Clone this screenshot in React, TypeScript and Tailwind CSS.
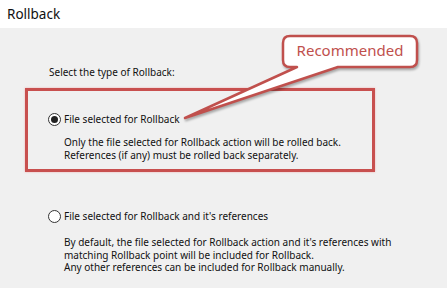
import React from "react";

function Radio({ checked }: { checked?: boolean }) {
  return (
    <span className="flex h-[13px] w-[13px] shrink-0 items-center justify-center rounded-full border border-[#333] bg-white">
      {checked && <span className="h-[7px] w-[7px] rounded-full bg-[#222]" />}
    </span>
  );
}

function Callout() {
  return (
    <div className="absolute left-[180px] top-[32px] h-[92px] w-[242px]">
      <svg
        className="absolute inset-0 drop-shadow-[1px_2px_1px_rgba(0,0,0,0.3)]"
        width="242"
        height="92"
        viewBox="180 32 242 92"
      >
        <path
          d="M290 36 H410 Q417 36 417 43 V60 Q417 67 410 67 H338 L185 118 L297 67 H290 Q283 67 283 60 V43 Q283 36 290 36 Z"
          fill="#fff"
          stroke="#c0504d"
          strokeWidth="2.5"
          strokeLinejoin="round"
        />
      </svg>
      <span className="absolute left-[103px] top-[8px] w-[134px] text-center text-[15px] leading-[20px] text-[#c0504d]">
        Recommended
      </span>
    </div>
  );
}

export default function App() {
  return (
    <div className="relative h-[288px] w-[447px] overflow-hidden whitespace-nowrap bg-[#f0f0f0] font-['Noto_Sans',sans-serif] text-[10px] text-[#111]">
      <div className="flex h-[28px] items-center bg-white px-[7px] text-[13.5px]">Rollback</div>

      <div className="pl-[25px]">
        <div className="mt-[38px] pl-[24px] leading-[13px]">Select the type of Rollback:</div>

        <div className="mt-[9px] h-[84px] w-[350px] border-[3px] border-[#c8504f] shadow-[0_0_2px_#f0b0b0]">
          <div className="mt-[21px] flex h-[14px] items-center gap-[3px] pl-[20px] leading-[13px]">
            <Radio checked />
            <span>File selected for Rollback</span>
          </div>
          <div className="mt-[10px] pl-[36px] leading-[12.5px]">
            <div>Only the file selected for Rollback action will be rolled back.</div>
            <div>References (if any) must be rolled back separately.</div>
          </div>
        </div>

        <div className="mt-[37px] flex h-[14px] items-center gap-[3px] pl-[23px] leading-[13px]">
          <Radio />
          <span>File selected for Rollback and it's references</span>
        </div>
        <div className="mt-[13px] pl-[39px] leading-[12.5px]">
          <div>By default, the file selected for Rollback action and it's references with</div>
          <div>matching Rollback point will be included for Rollback.</div>
          <div>Any other references can be included for Rollback manually.</div>
        </div>
      </div>

      <Callout />
    </div>
  );
}
